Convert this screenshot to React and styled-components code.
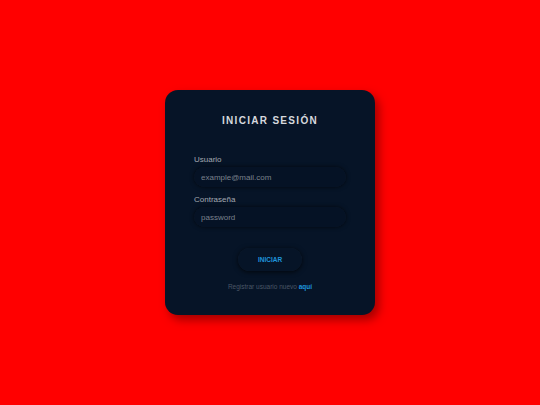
import React from "react";
import styled, { createGlobalStyle } from "styled-components";

const GlobalStyle = createGlobalStyle`
  html, body {
    margin: 0;
    padding: 0;
  }
  body {
    background: #ff0000;
    font-family: "Liberation Sans", Arial, sans-serif;
  }
`;

const Page = styled.main`
  height: 100vh;
  display: flex;
  align-items: center;
  justify-content: center;
`;

const Card = styled.form`
  width: 210px;
  height: 225px;
  box-sizing: border-box;
  padding: 25px 29px 0;
  background: #061427;
  border-radius: 13px;
  box-shadow: 4px 5px 10px rgba(90, 0, 0, 0.55);
  display: flex;
  flex-direction: column;
`;

const Title = styled.h1`
  margin: 0 0 29px;
  text-align: center;
  font-size: 10px;
  font-weight: bold;
  letter-spacing: 1.3px;
  color: #d6d9de;
`;

const Field = styled.label`
  display: flex;
  flex-direction: column;
  gap: 3px;
  margin-bottom: 8px;
`;

const LabelText = styled.span`
  font-size: 8px;
  color: #a4a9b1;
`;

const Input = styled.input`
  height: 20px;
  box-sizing: border-box;
  border: none;
  outline: none;
  border-radius: 10px;
  padding: 0 7px;
  background: #051225;
  box-shadow: 0 0 4px rgba(0, 0, 0, 0.65), inset 0 0 1px rgba(255, 255, 255, 0.07);
  font-family: inherit;
  font-size: 8px;
  color: #c0c4ca;

  &::placeholder {
    color: #7a818c;
  }
`;

const Button = styled.button`
  align-self: center;
  margin-top: 13px;
  width: 64px;
  height: 23px;
  border: none;
  border-radius: 12px;
  background: #061427;
  box-shadow: 0 1px 5px rgba(0, 0, 0, 0.7), inset 0 0 1px rgba(255, 255, 255, 0.07);
  font-family: inherit;
  font-size: 6.5px;
  font-weight: bold;
  color: #1f95dc;
  cursor: pointer;
`;

const Footer = styled.p`
  margin: 12px 0 0;
  text-align: center;
  font-size: 6.5px;
  color: #4a5666;
`;

const Link = styled.a`
  color: #1f95dc;
  font-weight: bold;
  text-decoration: none;
`;

export default function App() {
  return (
    <>
      <GlobalStyle />
      <Page>
        <Card onSubmit={(e) => e.preventDefault()}>
          <Title>INICIAR SESIÓN</Title>
          <Field>
            <LabelText>Usuario</LabelText>
            <Input type="text" placeholder="example@mail.com" />
          </Field>
          <Field>
            <LabelText>Contraseña</LabelText>
            <Input type="password" placeholder="password" />
          </Field>
          <Button type="submit">INICIAR</Button>
          <Footer>
            Registrar usuario nuevo <Link href="#">aquí</Link>
          </Footer>
        </Card>
      </Page>
    </>
  );
}
